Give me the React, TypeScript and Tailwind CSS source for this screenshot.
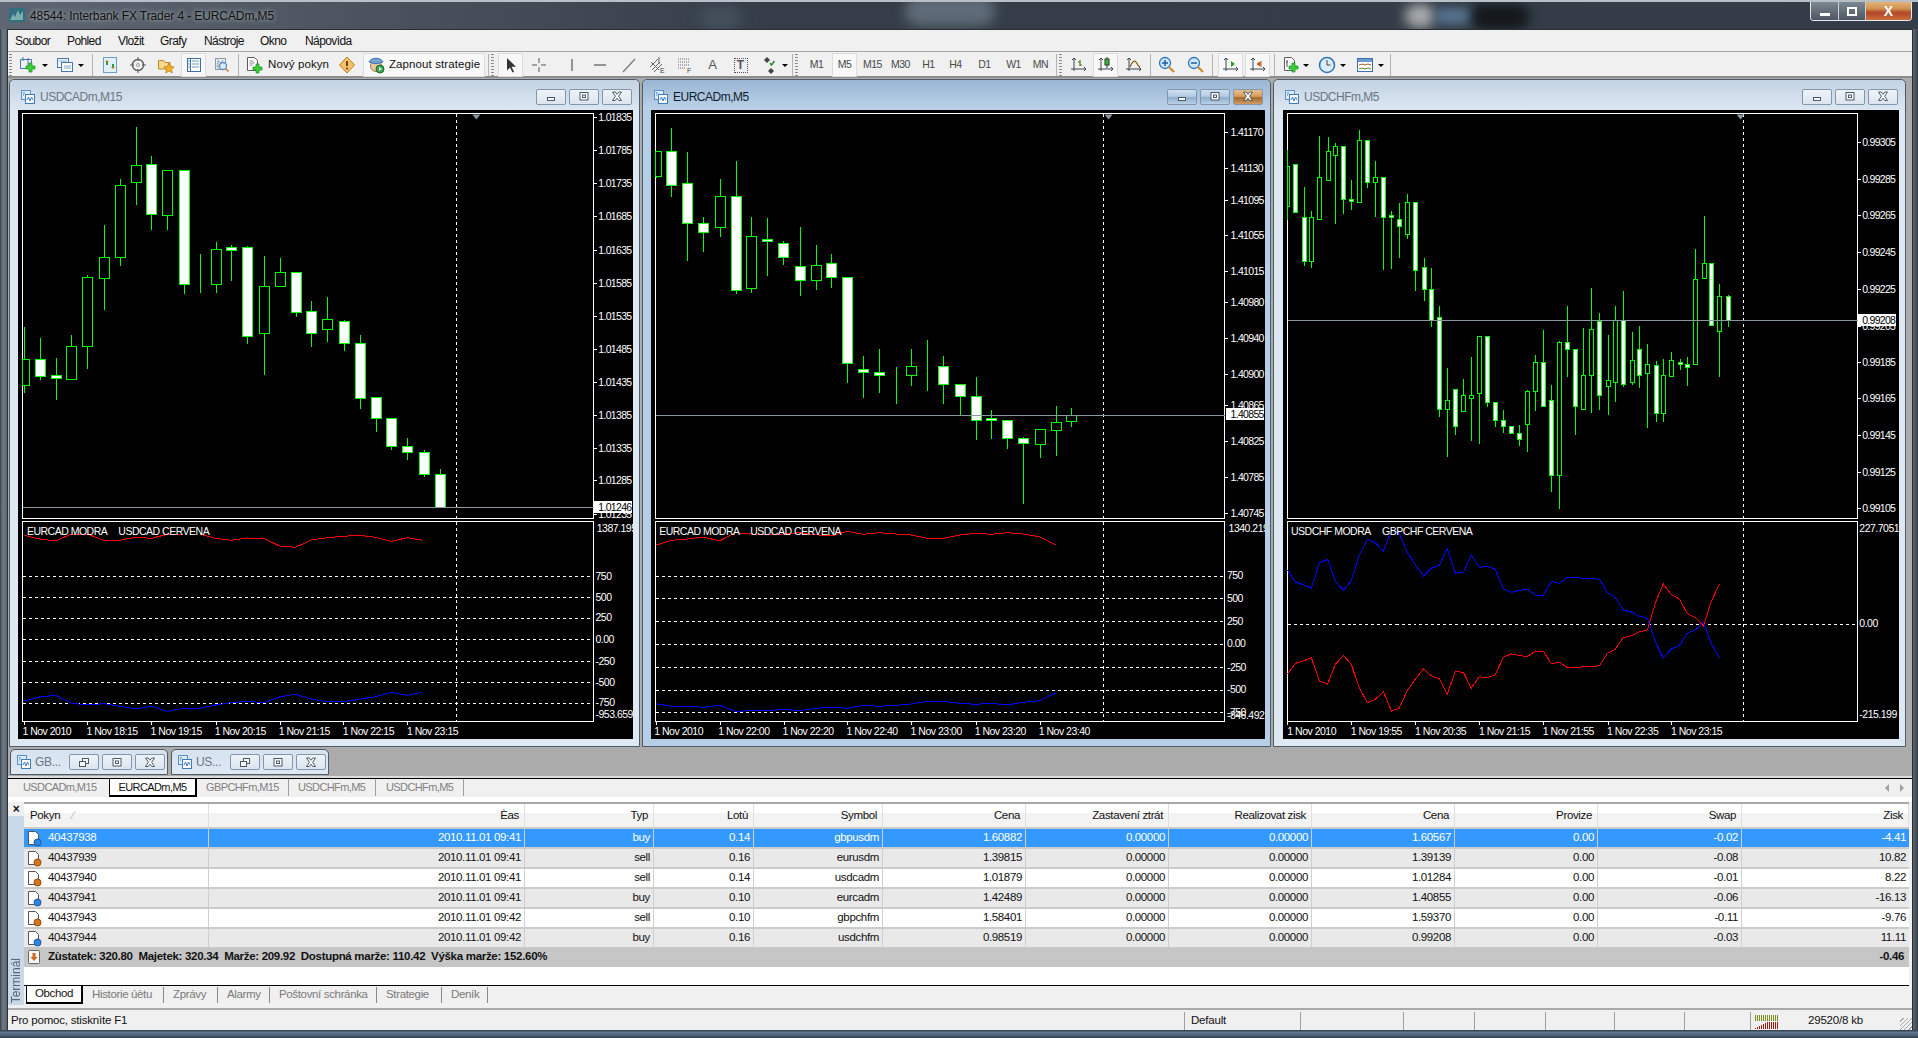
import type { ReactNode } from "react"

type Candle = [number, number, number, number, number, number]
type Label = [string, number, number]

const chart1: Candle[] = [
  [58, 678, 778, 856, 875, 0], [97, 712, 776, 829, 838, 1], [136, 772, 826, 835, 898, 1], [175, 703, 737, 838, 838, 0],
  [214, 522, 532, 737, 803, 0], [254, 373, 472, 535, 626, 0], [293, 235, 254, 472, 494, 0], [332, 78, 196, 247, 311, 0],
  [371, 166, 193, 343, 386, 1], [410, 208, 211, 346, 386, 0], [450, 211, 211, 553, 578, 1], [489, 460, 553, 553, 575, 0],
  [528, 424, 448, 553, 575, 0], [567, 433, 442, 451, 539, 1], [606, 436, 442, 709, 728, 1], [646, 466, 559, 700, 821, 0],
  [685, 472, 517, 559, 559, 0], [724, 517, 517, 637, 647, 1], [763, 601, 634, 700, 737, 1], [802, 589, 658, 688, 722, 0],
  [842, 658, 664, 730, 749, 1], [881, 703, 730, 895, 923, 1], [920, 892, 892, 955, 992, 1], [959, 955, 955, 1039, 1046, 1],
  [998, 1012, 1039, 1057, 1076, 1], [1038, 1048, 1055, 1123, 1127, 1], [1077, 1105, 1123, 1222, 1222, 1],
]

const chart2: Candle[] = [
  [38, 154, 154, 227, 230, 0], [77, 82, 154, 256, 287, 1], [116, 154, 250, 370, 479, 1], [155, 349, 370, 397, 452, 1],
  [195, 235, 289, 382, 407, 0], [234, 181, 289, 571, 578, 1], [273, 349, 409, 565, 575, 0], [312, 352, 418, 424, 524, 1],
  [351, 421, 430, 472, 491, 1], [391, 379, 499, 541, 584, 1], [430, 433, 496, 541, 566, 0], [469, 460, 490, 532, 560, 1],
  [508, 532, 532, 790, 845, 1], [547, 766, 808, 817, 892, 1], [586, 745, 817, 826, 875, 1], [626, 799, 826, 826, 908, 0],
  [665, 745, 799, 826, 854, 0], [704, 718, 799, 799, 869, 0], [743, 766, 799, 853, 908, 1], [783, 853, 853, 889, 946, 1],
  [822, 829, 889, 961, 1016, 1], [861, 928, 955, 961, 1013, 1], [900, 961, 961, 1015, 1043, 1], [939, 1009, 1015, 1030, 1210, 1],
  [979, 988, 988, 1033, 1070, 0], [1018, 916, 967, 991, 1064, 0], [1057, 922, 946, 964, 977, 0],
]

const chart3: Candle[] = [
  [18, 148, 199, 319, 358, 0], [38, 193, 193, 337, 337, 1], [58, 259, 352, 484, 496, 1], [77, 331, 352, 484, 502, 0],
  [97, 106, 232, 358, 358, 0], [117, 109, 154, 241, 241, 0], [136, 127, 139, 166, 370, 0], [156, 139, 139, 298, 338, 1],
  [175, 238, 298, 304, 326, 1], [195, 88, 121, 307, 307, 0], [215, 121, 121, 247, 260, 1], [234, 181, 232, 247, 347, 0],
  [254, 232, 232, 352, 506, 1], [274, 331, 346, 352, 503, 1], [293, 307, 358, 379, 470, 1], [313, 280, 307, 403, 413, 0],
  [333, 304, 307, 511, 569, 1], [353, 472, 502, 568, 601, 1], [372, 502, 568, 661, 677, 1], [392, 616, 650, 928, 947, 1],
  [411, 802, 901, 928, 1067, 0], [431, 868, 868, 979, 1001, 1], [451, 835, 886, 934, 934, 0], [470, 769, 886, 895, 1019, 0],
  [490, 709, 709, 880, 1028, 0], [510, 709, 709, 907, 919, 1], [529, 907, 907, 961, 979, 1], [549, 928, 961, 979, 995, 1],
  [569, 979, 979, 1000, 1000, 1], [588, 973, 1000, 1018, 1034, 1], [608, 868, 874, 973, 1052, 0], [628, 763, 787, 874, 929, 0],
  [647, 688, 787, 919, 919, 1], [667, 853, 901, 1126, 1172, 1], [687, 721, 727, 1126, 1223, 0], [706, 616, 727, 748, 827, 1],
  [726, 748, 748, 919, 1001, 1], [746, 682, 826, 928, 928, 0], [765, 562, 688, 826, 935, 0], [785, 637, 664, 886, 928, 1],
  [805, 703, 841, 859, 941, 0], [824, 616, 661, 847, 902, 0], [844, 571, 661, 853, 859, 1], [864, 694, 781, 847, 853, 0],
  [883, 676, 748, 826, 862, 1], [903, 730, 793, 820, 980, 0], [923, 781, 796, 940, 962, 1], [942, 775, 826, 940, 962, 0],
  [962, 754, 781, 829, 829, 0], [982, 773, 787, 793, 808, 1], [1001, 769, 793, 802, 854, 1], [1021, 445, 538, 793, 793, 0],
  [1041, 346, 490, 535, 535, 0], [1060, 490, 490, 676, 676, 1], [1080, 550, 589, 694, 827, 0], [1100, 583, 589, 661, 677, 1],
]

const blue3 = [180, 216, 224, 235, 158, 148, 213, 241, 213, 135, 88, 98, 124, 60, 70, 127, 165, 198, 175, 165, 115, 190, 186, 135, 172, 169, 178, 236, 247, 241, 238, 256, 256, 214, 220, 202, 202, 205, 205, 208, 248, 262, 300, 306, 318, 325, 397, 444, 417, 406, 370, 360, 338, 400, 443]
const x3 = chart3.map((c) => c[0])

const series = (xs: number[], ys: number[]) => ys.map((y, i) => [xs[i], y] as [number, number])

const xs1 = [58, 97, 136, 175, 214, 254, 293, 332, 371, 410, 450, 489, 528, 567, 606, 646, 685, 724, 763, 802, 842, 881, 920, 959, 998, 1035]
const xs2 = [38, 77, 116, 155, 195, 234, 273, 312, 351, 391, 430, 469, 508, 547, 586, 626, 665, 704, 743, 783, 822, 861, 900, 939, 979, 1018]

const panes = [
  {
    x0: 0, left: 18, sx: 2.45, candles: chart1, bodyW: 10, frame: [54, 1452], vline: 1116, tri: 1167,
    prices: [["1.01835", 52], ["1.01785", 151], ["1.01735", 250], ["1.01685", 349], ["1.01635", 449], ["1.01585", 548], ["1.01535", 647], ["1.01485", 746], ["1.01435", 845], ["1.01385", 944], ["1.01335", 1043], ["1.01285", 1141], ["1.01235", 1241]] as [string, number][],
    labelX: 1466, bid: ["1.01246", 1220, 1222] as [string, number, number], bidBox: 1455,
    levels: [199, 262, 325, 388, 454, 517, 580],
    subLabels: [["1387.195", 1462, 55], ["750", 1459, 197], ["500", 1459, 260], ["250", 1459, 322], ["0.00", 1459, 386], ["-250", 1459, 452], ["-500", 1459, 515], ["-750", 1459, 577], ["-953.659", 1459, 612]] as Label[],
    legend: [["EURCAD MODRA", 66], ["USDCAD CERVENA", 290]] as [string, number][],
    times: ["1 Nov 2010", "1 Nov 18:15", "1 Nov 19:15", "1 Nov 20:15", "1 Nov 21:15", "1 Nov 22:15", "1 Nov 23:15"],
    timeX: [55, 212, 369, 526, 683, 840, 997], tickX: [58, 214, 371, 528, 685, 841, 998],
    red: series(xs1, [76, 87, 93, 72, 72, 91, 91, 82, 85, 73, 72, 72, 85, 91, 84, 85, 108, 112, 90, 83, 79, 76, 82, 94, 83, 91]),
    blue: series(xs1, [573, 561, 556, 579, 585, 581, 589, 597, 589, 604, 595, 595, 585, 578, 574, 578, 561, 553, 567, 575, 575, 568, 560, 547, 556, 547]),
  },
  {
    x0: 640, left: 651, sx: 2.45, candles: chart2, bodyW: 10, frame: [36, 1432], vline: 1135, tri: 1148,
    prices: [["1.41170", 95], ["1.41130", 203], ["1.41095", 299], ["1.41055", 404], ["1.41015", 512], ["1.40980", 607], ["1.40940", 713], ["1.40900", 821], ["1.40865", 916], ["1.40825", 1022], ["1.40785", 1130], ["1.40745", 1238]] as [string, number][],
    labelX: 1447, bid: ["1.40855", 943, 946] as [string, number, number], bidBox: 1436,
    levels: [197, 265, 334, 403, 472, 539, 607],
    subLabels: [["1340.219", 1442, 55], ["750", 1438, 195], ["500", 1438, 263], ["250", 1438, 332], ["0.00", 1438, 400], ["-250", 1438, 470], ["-500", 1438, 537], ["-750", 1438, 606], ["-846.492", 1438, 614]] as Label[],
    legend: [["EURCAD MODRA", 47], ["USDCAD CERVENA", 270]] as [string, number][],
    times: ["1 Nov 2010", "1 Nov 22:00", "1 Nov 22:20", "1 Nov 22:40", "1 Nov 23:00", "1 Nov 23:20", "1 Nov 23:40"],
    timeX: [35, 192, 349, 506, 663, 820, 977], tickX: [38, 195, 352, 508, 665, 822, 979],
    red: series(xs2, [106, 91, 87, 81, 93, 68, 72, 72, 72, 68, 74, 78, 64, 73, 68, 72, 75, 85, 85, 75, 70, 73, 68, 72, 80, 104]),
    blue: series(xs2, [581, 589, 589, 592, 586, 604, 602, 602, 598, 602, 595, 592, 595, 586, 589, 586, 582, 574, 574, 580, 583, 580, 585, 577, 572, 549]),
  },
  {
    x0: 1280, left: 1283, sx: 2.458, candles: chart3, bodyW: 4, frame: [16, 1418], vline: 1139, tri: 1132,
    prices: [["0.99305", 125], ["0.99285", 236], ["0.99265", 344], ["0.99245", 455], ["0.99225", 566], ["0.99205", 677], ["0.99185", 786], ["0.99165", 893], ["0.99145", 1004], ["0.99125", 1115], ["0.99105", 1223]] as [string, number][],
    labelX: 1431, bid: ["0.99208", 659, 661] as [string, number, number], bidBox: 1421,
    levels: [343],
    subLabels: [["227.7051", 1424, 55], ["0.00", 1424, 340], ["-215.199", 1424, 613]] as Label[],
    legend: [["USDCHF MODRA", 27], ["GBPCHF CERVENA", 251]] as [string, number][],
    times: ["1 Nov 2010", "1 Nov 19:55", "1 Nov 20:35", "1 Nov 21:15", "1 Nov 21:55", "1 Nov 22:35", "1 Nov 23:15"],
    timeX: [18, 174, 332, 489, 646, 804, 961], tickX: [18, 175, 333, 490, 647, 805, 962],
    red: series(x3, blue3.map((b) => 343 + (343 - b) * (b < 343 ? 0.92 : 1.2))),
    blue: series(x3, blue3),
  },
]

const ChartPane = ({ p }: { p: (typeof panes)[number] }) => {
  const fx = (d: number) => d / p.sx + p.x0 - p.left
  const fy = (d: number) => d / 3 + 100 - 110
  const sy = (d: number) => d / 3 + 510 - 110
  const crisp = (v: number) => Math.round(v) + 0.5
  const l = crisp(fx(p.frame[0]))
  const r = crisp(fx(p.frame[1]))
  const top1 = crisp(fy(40))
  const bot1 = crisp(fy(1255))
  const top2 = crisp(sy(32))
  const bot2 = crisp(sy(634))
  const v = crisp(fx(p.vline))
  const t = fx(p.tri)
  const poly = (pts: [number, number][]) => pts.map(([x, y]) => `${fx(x).toFixed(1)},${sy(y).toFixed(1)}`).join(" ")

  return (
    <svg className="w-full h-full block bg-black font-['Liberation_Sans',sans-serif]" fill="#fff" fontSize="10.5" letterSpacing="-0.5">
      <g shapeRendering="crispEdges">
        <rect x={l} y={top1} width={r - l} height={bot1 - top1} fill="none" stroke="#fff" />
        <rect x={l} y={top2} width={r - l} height={bot2 - top2} fill="none" stroke="#fff" />
        <line x1={v} x2={v} y1={top1} y2={bot2} stroke="#fff" strokeDasharray="3 3" />
        {p.candles.map(([x, hi, top, bottom, lo, fill]) => {
          const cx = crisp(fx(x))
          const x1 = Math.max(cx - p.bodyW / 2, l)
          const x2 = cx + p.bodyW / 2
          return (
            <g key={x} stroke="#00ff00">
              <line x1={cx} x2={cx} y1={crisp(fy(hi))} y2={crisp(fy(lo))} />
              <rect x={x1} y={crisp(fy(top))} width={x2 - x1} height={Math.max(Math.round(fy(bottom)) - Math.round(fy(top)), 0)} fill={fill ? "#fff" : "#000"} />
            </g>
          )
        })}
        {p.levels.map((y) => (
          <line key={y} x1={l} x2={r} y1={crisp(sy(y))} y2={crisp(sy(y))} stroke="#fff" strokeDasharray="3 3" />
        ))}
        <line x1={l} x2={r} y1={crisp(fy(p.bid[2]))} y2={crisp(fy(p.bid[2]))} stroke="#8c96a0" />
        {p.prices.map(([s, y]) => (
          <line key={s} x1={r} x2={r + 3} y1={crisp(fy(y))} y2={crisp(fy(y))} stroke="#fff" />
        ))}
        {p.tickX.map((x) => (
          <line key={x} x1={crisp(fx(x))} x2={crisp(fx(x))} y1={bot2} y2={bot2 + 3} stroke="#fff" />
        ))}
        <polyline points={poly(p.red)} fill="none" stroke="#ff0000" />
        <polyline points={poly(p.blue)} fill="none" stroke="#0000ff" />
      </g>
      <path d={`M${t - 4} ${top1 + 1}h8l-4 5z`} fill="#8c96a0" />
      {p.prices.map(([s, y]) => (
        <text key={s} x={fx(p.labelX)} y={fy(y) + 4} letterSpacing="-0.7">{s}</text>
      ))}
      <rect x={fx(p.bidBox)} y={Math.round(fy(p.bid[1])) - 6} width="38" height="12" fill="#fff" shapeRendering="crispEdges" />
      <text x={fx(p.labelX)} y={fy(p.bid[1]) + 4} fill="#000" letterSpacing="-0.7">{p.bid[0]}</text>
      {p.subLabels.map(([s, x, y]) => (
        <text key={s} x={fx(x)} y={sy(y) + 4}>{s}</text>
      ))}
      {p.legend.map(([s, x]) => (
        <text key={s} x={fx(x)} y={sy(62) + 4}>{s}</text>
      ))}
      {p.times.map((s, i) => (
        <text key={s} x={fx(p.timeX[i])} y={sy(662) + 4}>{s}</text>
      ))}
    </svg>
  )
}

const WinIcon = () => (
  <svg width="16" height="16" viewBox="0 0 16 16" fill="none" className="shrink-0">
    <rect x="1.5" y="1.5" width="9" height="9" fill="#dcecfb" stroke="#5b8fc7" />
    <rect x="5.5" y="5.5" width="9" height="9" fill="#fff" stroke="#3d7cc0" />
    <path d="M7 11l1.5-3 1.5 4 1.5-4 1.5 3" stroke="#3d7cc0" />
    <path d="M3 4h2M3 6h1" stroke="#3d7cc0" />
  </svg>
)

const Glyph = ({ kind }: { kind: string }) => (
  <svg width="12" height="11" viewBox="0 0 12 11" fill="none">
    {kind === "min" && <rect x="2.5" y="6.5" width="7" height="3" fill="#fff" stroke="#4c5a68" />}
    {kind === "max" && <><rect x="2" y="1.5" width="8" height="7.5" fill="#fff" stroke="#4c5a68" /><rect x="4.5" y="4" width="3" height="2.5" stroke="#4c5a68" /></>}
    {kind === "restore" && <><rect x="4.5" y="1.5" width="6" height="5" fill="#fff" stroke="#4c5a68" /><rect x="1.5" y="4.5" width="6" height="5" fill="#fff" stroke="#4c5a68" /></>}
    {kind === "close" && <path d="M1.5 1h2.7L6 3.3 7.8 1h2.7L7.6 5.2l2.9 4.3H7.8L6 7.2 4.2 9.5H1.5l2.9-4.3z" fill="#fff" stroke="#4c5a68" />}
  </svg>
)

const WinBtn = ({ kind, active }: { kind: string; active?: boolean }) => (
  <div
    className={`w-[30px] h-[16px] rounded-[2px] border border-[#8297ad] flex items-center justify-center ${
      active && kind === "close"
        ? "bg-[linear-gradient(#e9c08e_0%,#d69d5b_45%,#a5682f_55%,#cf9c63_100%)] border-[#7a4a22]"
        : active
          ? "bg-[linear-gradient(#cfe0f1_0%,#b3cbe3_45%,#8fadc9_55%,#bcd2e8_100%)]"
          : "bg-[linear-gradient(#eef3f8,#dbe5ef)]"
    }`}
  >
    <Glyph kind={kind} />
  </div>
)

const ChartWindow = ({ title, p, className, inner, active }: { title: string; p: (typeof panes)[number]; className: string; inner: string; active?: boolean }) => (
  <div className={`flex flex-col rounded-t-[5px] border border-[#4e5a66] pb-[7px] ${className} ${active ? "bg-[#b5cfe9]" : "bg-[#dde8f3]"}`}>
    <div
      className={`h-[30px] shrink-0 flex items-center gap-[4px] rounded-t-[5px] pt-[3px] pl-[10px] pr-[7px] ${
        active ? "bg-[linear-gradient(#9ab6d3,#bcd2e9)] text-[#101c2c]" : "bg-[linear-gradient(#c4d3e2,#dbe6f2)] text-[#6b7683]"
      }`}
    >
      <WinIcon />
      <span className="text-[12px] tracking-[-0.5px]">{title}</span>
      <div className="ml-auto flex gap-[3px]">
        <WinBtn kind="min" active={active} />
        <WinBtn kind="max" active={active} />
        <WinBtn kind="close" active={active} />
      </div>
    </div>
    <div className={`flex-1 min-h-0 ${inner}`}>
      <ChartPane p={p} />
    </div>
  </div>
)

const MiniWindow = ({ title }: { title: string }) => (
  <div className="w-[158px] h-[26px] flex items-center rounded-t-[5px] border border-[#4e5a66] bg-[linear-gradient(#d6e2ef,#dfe9f4)] pl-[5px] text-[#6b7683]">
    <WinIcon />
    <span className="ml-[3px] w-[34px] text-[12px] tracking-[-0.3px]">{title}</span>
    <div className="flex gap-[3px]">
      <WinBtn kind="restore" />
      <WinBtn kind="max" />
      <WinBtn kind="close" />
    </div>
  </div>
)

const Sep = ({ className = "" }: { className?: string }) => <div className={`w-px h-[22px] bg-[#b4b4b4] ${className}`} />
const Grip = ({ className = "" }: { className?: string }) => (
  <div className={`w-[3px] h-[22px] bg-[repeating-linear-gradient(#8a8a8a_0_1px,transparent_1px_3px)] ${className}`} />
)

const Btn = ({ children, className = "", on }: { children?: ReactNode; className?: string; on?: boolean }) => (
  <div className={`h-[24px] flex items-center justify-center text-[11px] text-[#4a4a4a] ${on ? "bg-[#f8f8f8] border border-[#dcdcdc]" : ""} ${className || "w-[25px]"}`}>
    {children}
  </div>
)

const Caret = ({ className = "w-[10px]" }: { className?: string }) => (
  <div className={`flex items-center justify-center ${className}`}>
    <div className="border-x-[3px] border-t-[3px] border-x-transparent border-t-black" />
  </div>
)

const Plus = () => <path d="M9 10h3V7h3v3h3v3h-3v3h-3v-3H9z" transform="translate(-2 0)" fill="#35d135" stroke="#1c8a1c" strokeWidth="0.7" />

const Ico = ({ children }: { children: ReactNode }) => (
  <svg width="18" height="18" viewBox="0 0 18 18" fill="none">{children}</svg>
)

const TimeBtn = ({ t, on, className = "w-[25px]" }: { t: string; on?: boolean; className?: string }) => (
  <Btn on={on} className={className}><span className="tracking-[-0.5px] text-[10.5px]">{t}</span></Btn>
)

const AxisIcon = ({ children }: { children?: ReactNode }) => (
  <Ico>
    <path d="M4 2v13M1 13h15M2 4l2-2 2 2M14 11l2 2-2 2" stroke="#3c4650" />
    {children}
  </Ico>
)

const Toolbar = () => (
  <div className="h-[27px] shrink-0 flex items-center pt-[2px] bg-[#f0f0f0] border-t border-b-2 border-t-[#a6a6a6] border-b-[#8c8c8c] font-['Liberation_Sans',sans-serif]">
    <Grip className="ml-[1px]" />
    <Btn className="w-[25px] ml-[3px]">
      <Ico><path d="M1.5 3.5h11M1.5 3.5v9h11v-9M4 1v4M9 2v8" stroke="#4777ab" /><Plus /></Ico>
    </Btn>
    <Caret />
    <Btn className="w-[23px] ml-[3px]">
      <Ico><rect x="1.5" y="2.5" width="11" height="9" stroke="#4777ab" fill="#eef5fc" /><rect x="5.5" y="6.5" width="11" height="9" stroke="#4777ab" fill="#fff" /><path d="M3 5h8M8 10h7M8 12h7" stroke="#88a9cc" /></Ico>
    </Btn>
    <Caret />
    <Sep className="ml-[6px]" />
    <Btn className="w-[25px] ml-[4px]">
      <Ico><rect x="2.5" y="1.5" width="13" height="15" fill="#e2f0fb" stroke="#6f9dc6" /><path d="M6 4l2 2H4zM12 13l-2-2h4z" fill="#c87b1a" /><path d="M6 6v3M12 8v3" stroke="#2c9a3a" strokeWidth="2" /></Ico>
    </Btn>
    <Btn className="w-[25px] ml-[3px]">
      <Ico><circle cx="9" cy="9" r="5.5" stroke="#5c5c5c" strokeWidth="1.4" /><circle cx="9" cy="9" r="1.5" stroke="#9a9a9a" /><path d="M9 1v4M9 13v4M1 9h4M13 9h4" stroke="#5c5c5c" /></Ico>
    </Btn>
    <Btn className="w-[25px] ml-[3px]">
      <Ico><path d="M1.5 13V4.5h5l1.5 2h5V13z" fill="#f6d98f" stroke="#b98a30" /><path d="M12 7l1.7 3.5 3.5.5-2.6 2.4.7 3.6-3.3-1.9L8.7 17l.7-3.6L6.8 11l3.5-.5z" fill="#f2b01e" stroke="#b8791a" strokeWidth="0.7" /></Ico>
    </Btn>
    <Btn on className="w-[25px] ml-[3px]">
      <Ico><rect x="2.5" y="2.5" width="13" height="13" fill="#fff" stroke="#3d6fa8" /><path d="M5.5 2.5v13" stroke="#3d6fa8" /><path d="M3 5h2M3 8h2M3 11h2M7 5h7M7 8h7M7 11h7" stroke="#6c97c4" /></Ico>
    </Btn>
    <Btn className="w-[25px] ml-[3px]">
      <Ico><rect x="2.5" y="2.5" width="10" height="11" fill="#eef2f6" stroke="#8a98a8" /><path d="M5 2v11M2 10h10M4 8l2-3 2 2 2-3" stroke="#a0a8b0" /><circle cx="10" cy="10" r="3.5" stroke="#5a8fc6" strokeWidth="1.3" fill="#dceafa" /><path d="M12.5 12.5l3 3" stroke="#c0843a" strokeWidth="1.6" /></Ico>
    </Btn>
    <Sep className="ml-[4px]" />
    <Btn className="w-[88px] ml-[6px] justify-start">
      <Ico><path d="M2.5 1.5h7l3 3v10h-10z" fill="#fff" stroke="#5c5c5c" /><path d="M4.5 5h4M4.5 7h5M4.5 9h3" stroke="#8a8a8a" /><path d="M9 10h3V7h3v3h3v3h-3v3h-3v-3H9z" transform="translate(-1 1)" fill="#35d135" stroke="#1c8a1c" strokeWidth="0.7" /></Ico>
      <span className="ml-[5px] text-[11.5px] text-[#111] tracking-[0.1px]">Nový pokyn</span>
    </Btn>
    <Btn className="w-[24px] ml-[2px]">
      <Ico><path d="M9 1l7.5 8L9 17 1.5 9z" fill="#f3c26a" stroke="#c07a1e" /><path d="M9 5v5" stroke="#7a3d0a" strokeWidth="2" /><circle cx="9" cy="12.5" r="1.1" fill="#7a3d0a" /></Ico>
    </Btn>
    <Btn on className="w-[122px] ml-[4px] justify-start pl-[3px]">
      <Ico><circle cx="9" cy="10" r="5.5" fill="#e9c9a0" stroke="#a87c4c" /><path d="M2 6c2-5 12-5 14 0-4 2-10 2-14 0z" fill="#6ea5d6" stroke="#3f74a8" /><circle cx="13" cy="13" r="4" fill="#34a84a" stroke="#1f6e2e" /><path d="M12 11l3 2-3 2z" fill="#fff" /></Ico>
      <span className="ml-[4px] text-[11.5px] text-[#111] tracking-[0.1px]">Zapnout strategie</span>
    </Btn>
    <Sep className="ml-[3px]" />
    <Grip className="ml-[2px]" />
    <Btn on className="w-[25px] ml-[4px]">
      <Ico><path d="M5 2v12.5l3-3 2.5 5 1.5-.8-2.4-5H14z" fill="#333" /></Ico>
    </Btn>
    <Btn className="w-[25px] ml-[3px]">
      <Ico><path d="M9 2v5M9 11v5M2 9h5M11 9h5" stroke="#555" /></Ico>
    </Btn>
    <Btn className="w-[25px] ml-[8px]"><Ico><path d="M9 3v12" stroke="#555" strokeWidth="1.2" /></Ico></Btn>
    <Btn className="w-[25px] ml-[3px]"><Ico><path d="M3 9h12" stroke="#555" strokeWidth="1.2" /></Ico></Btn>
    <Btn className="w-[25px] ml-[4px]"><Ico><path d="M3 16L15 3" stroke="#777" strokeWidth="1.2" /></Ico></Btn>
    <Btn className="w-[25px] ml-[3px]">
      <Ico><path d="M2 11l8-8M4 14l8-8M6 16l8-8M3 6l8 8M11 1v7" stroke="#666" /><text x="12" y="17" fontSize="7" fill="#444" stroke="none" fontFamily="Liberation Sans">E</text></Ico>
    </Btn>
    <Btn className="w-[25px] ml-[3px]">
      <Ico><path d="M2 3h12M2 6h12M2 9h12M2 12h8" stroke="#666" strokeDasharray="1 1" /><text x="11" y="17" fontSize="7" fill="#444" stroke="none" fontFamily="Liberation Sans">F</text></Ico>
    </Btn>
    <Btn className="w-[25px] ml-[3px]"><span className="text-[13px] text-[#555]">A</span></Btn>
    <Btn className="w-[25px] ml-[3px]">
      <div className="w-[14px] h-[15px] border border-dotted border-[#555] flex items-center justify-center text-[12px] font-bold text-[#555] leading-none">T</div>
    </Btn>
    <Btn className="w-[25px] ml-[3px]">
      <Ico><path d="M7 1l3 3-3 3-3-3z" fill="#444" /><path d="M10 7l1.5 2 3-4" stroke="#2a8a2a" strokeWidth="1.4" /><path d="M11 12l3 3-3 3-3-3z" fill="#444" /></Ico>
    </Btn>
    <Caret className="w-[8px]" />
    <Sep className="ml-[3px]" />
    <Grip className="ml-[2px]" />
    <TimeBtn t="M1" className="w-[25px] ml-[6px]" />
    <TimeBtn t="M5" on className="w-[25px] ml-[3px]" />
    <TimeBtn t="M15" className="w-[25px] ml-[3px]" />
    <TimeBtn t="M30" className="w-[25px] ml-[3px]" />
    <TimeBtn t="H1" className="w-[25px] ml-[3px]" />
    <TimeBtn t="H4" className="w-[25px] ml-[2px]" />
    <TimeBtn t="D1" className="w-[25px] ml-[4px]" />
    <TimeBtn t="W1" className="w-[25px] ml-[4px]" />
    <TimeBtn t="MN" className="w-[25px] ml-[2px]" />
    <Sep className="ml-[3px]" />
    <Grip className="ml-[2px]" />
    <Btn className="w-[25px] ml-[4px]"><AxisIcon><path d="M10 4v6M10 9h2M8 6h2" stroke="#4a7a14" strokeWidth="1.2" /></AxisIcon></Btn>
    <Btn on className="w-[25px] ml-[2px]"><AxisIcon><path d="M10 1v11" stroke="#333" /><rect x="8" y="3" width="4" height="6" fill="#2fc22f" stroke="#333" /></AxisIcon></Btn>
    <Btn className="w-[25px] ml-[3px]"><AxisIcon><path d="M5 11c2-6 5-7 6-5s2 4 4 5" stroke="#8a5a14" strokeWidth="1.2" /></AxisIcon></Btn>
    <Sep className="ml-[4px]" />
    <Btn className="w-[25px] ml-[3px]">
      <Ico><circle cx="7" cy="7" r="5.5" fill="#cfe6fb" stroke="#2e76bd" strokeWidth="1.3" /><path d="M4 7h6M7 4v6" stroke="#1a5fa5" strokeWidth="1.5" /><path d="M11 11l5 5" stroke="#d28a2a" strokeWidth="2.2" /></Ico>
    </Btn>
    <Btn className="w-[25px] ml-[4px]">
      <Ico><circle cx="7" cy="7" r="5.5" fill="#cfe6fb" stroke="#2e76bd" strokeWidth="1.3" /><path d="M4 7h6" stroke="#1a5fa5" strokeWidth="1.5" /><path d="M11 11l5 5" stroke="#d28a2a" strokeWidth="2.2" /></Ico>
    </Btn>
    <Sep className="ml-[4px]" />
    <Btn on className="w-[25px] ml-[5px]"><AxisIcon><path d="M9 5v6l4-3z" fill="#2f9a2f" /></AxisIcon></Btn>
    <Btn on className="w-[25px] ml-[2px]"><AxisIcon><path d="M12 5v6M8 8l3-2v4z" fill="#c8561a" stroke="#c8561a" /></AxisIcon></Btn>
    <Sep className="ml-[4px]" />
    <Btn className="w-[21px] ml-[5px]">
      <Ico><path d="M2.5 1.5h7l3 3v10h-10z" fill="#fff" stroke="#5c5c5c" /><path d="M5 4v7M4 6h2" stroke="#555" /><Plus /></Ico>
    </Btn>
    <Caret />
    <Btn className="w-[22px] ml-[5px]">
      <Ico><circle cx="9" cy="9" r="7.5" fill="#dcecfb" stroke="#2e76bd" strokeWidth="1.6" /><path d="M9 4v5h3.5" stroke="#444" /></Ico>
    </Btn>
    <Caret />
    <Btn className="w-[22px] ml-[6px]">
      <Ico><rect x="1.5" y="2.5" width="15" height="13" fill="#fff" stroke="#3d6fa8" /><rect x="2" y="3" width="14" height="3" fill="#6c9bd0" /><path d="M3 9l3-1 3 1 3-1 3 1" stroke="#a0641e" /><path d="M3 13l3-1 3 1 3-1 3 1" stroke="#6c8a1e" /></Ico>
    </Btn>
    <Caret />
    <Sep className="ml-[4px]" />
  </div>
)

const columns = "grid-cols-[185px_316px_129px_100px_129px_143px_143px_143px_143px_143px_144px_1fr]"

const headers = ["Èas", "Typ", "Lotù", "Symbol", "Cena", "Zastavení ztrát", "Realizovat zisk", "Cena", "Provize", "Swap", "Zisk"]

const orders = [
  ["40437938", "2010.11.01 09:41", "buy", "0.14", "gbpusdm", "1.60882", "0.00000", "0.00000", "1.60567", "0.00", "-0.02", "-4.41"],
  ["40437939", "2010.11.01 09:41", "sell", "0.16", "eurusdm", "1.39815", "0.00000", "0.00000", "1.39139", "0.00", "-0.08", "10.82"],
  ["40437940", "2010.11.01 09:41", "sell", "0.14", "usdcadm", "1.01879", "0.00000", "0.00000", "1.01284", "0.00", "-0.01", "8.22"],
  ["40437941", "2010.11.01 09:41", "buy", "0.10", "eurcadm", "1.42489", "0.00000", "0.00000", "1.40855", "0.00", "-0.06", "-16.13"],
  ["40437943", "2010.11.01 09:42", "sell", "0.10", "gbpchfm", "1.58401", "0.00000", "0.00000", "1.59370", "0.00", "-0.11", "-9.76"],
  ["40437944", "2010.11.01 09:42", "buy", "0.16", "usdchfm", "0.98519", "0.00000", "0.00000", "0.99208", "0.00", "-0.03", "11.11"],
]

const OrderIcon = ({ buy }: { buy: boolean }) => (
  <svg width="15" height="17" viewBox="0 0 15 17" fill="none" className="shrink-0">
    <path d="M1.5 1.5h7l3 3v10h-10z" fill="#fff" stroke="#555" />
    <circle cx="10.5" cy="12.5" r="3.5" fill={buy ? "#2f86de" : "#d6761e"} stroke={buy ? "#1c5aa0" : "#8f4a10"} />
  </svg>
)

const ChartTab = ({ t, className }: { t: string; className: string }) => (
  <div className={`h-[17px] flex items-center text-[11px] tracking-[-0.6px] text-[#808080] ${className}`}>{t}</div>
)

const BottomTab = ({ t, className }: { t: string; className: string }) => (
  <div className={`h-[16px] mt-[1px] flex items-center border-r border-[#8a8a8a] text-[#7a7a7a] ${className}`}>{t}</div>
)

const Terminal = () => (
  <div className="h-[232px] shrink-0 flex flex-col bg-[#f0f0f0] text-[11.5px] tracking-[-0.35px] text-[#111]">
    <div className="h-[2px] bg-[#dcdcdc]" />
    <div className="h-[19px] shrink-0 flex items-start border-t border-black">
      <ChartTab t="USDCADm,M15" className="pl-[15px] w-[101px]" />
      <div className="w-[88px] h-[18px] flex items-center justify-center bg-white border-l border-r-2 border-b-2 border-black text-[11px] tracking-[-0.6px] text-[#111]">EURCADm,M5</div>
      <ChartTab t="GBPCHFm,M15" className="pl-[9px] w-[92px] border-r border-[#a0a0a0]" />
      <ChartTab t="USDCHFm,M5" className="pl-[9px] w-[87px] border-r border-[#a0a0a0]" />
      <ChartTab t="USDCHFm,M5" className="pl-[10px] w-[88px] border-r border-[#a0a0a0]" />
      <div className="ml-auto flex gap-[11px] pr-[8px] pt-[5px]">
        <div className="border-y-[4px] border-r-[4px] border-y-transparent border-r-[#a0a0a0]" />
        <div className="border-y-[4px] border-l-[4px] border-y-transparent border-l-[#a0a0a0]" />
      </div>
    </div>
    <div className="h-[5px] shrink-0 bg-white" />
    <div className="flex-1 flex min-h-0 pb-[3px]">
      <div className="w-[16px] shrink-0 flex flex-col">
        <div className="h-[14px] flex items-center justify-center font-bold text-[12px] leading-none">×</div>
        <div className="flex-1 bg-[#c9d9e9] flex items-end justify-center pb-[2px]">
          <span className="[writing-mode:vertical-rl] rotate-180 text-[12px] tracking-normal text-[#5a6470]">Terminál</span>
        </div>
      </div>
      <div className="flex-1 flex flex-col min-w-0 bg-white mr-[3px]">
        <div className={`h-[25px] shrink-0 grid ${columns} border-t-2 border-[#a8a8a8] bg-[linear-gradient(#fff_38%,#f3f3f3_38%)]`}>
          <div className="flex items-center pl-[6px] border-r border-[#e0e0e0]">
            Pokyn<span className="ml-[12px] text-[#bbb]">∕</span>
          </div>
          {headers.map((h, i) => (
            <div key={i} className="flex items-center justify-end pr-[5px] border-r border-[#e0e0e0]">{h}</div>
          ))}
        </div>
        {orders.map((row, i) => (
          <div
            key={row[0]}
            className={`h-[20px] shrink-0 grid ${columns} border-t-2 border-[#cbcbcb] ${
              i === 0 ? "bg-[#3399ff] text-white" : i % 2 ? "bg-[#e9e9e9]" : "bg-white"
            }`}
          >
            <div className="flex items-center pl-[3px] gap-[6px] border-r border-[#cfcfcf]">
              <OrderIcon buy={row[2] === "buy"} />
              {row[0]}
            </div>
            {row.slice(1).map((c, j) => (
              <div key={j} className={`flex items-center justify-end pr-[3px] border-[#cfcfcf] ${j < 10 ? "border-r" : ""}`}>{c}</div>
            ))}
          </div>
        ))}
        <div className="h-[20px] shrink-0 flex items-center bg-[#c6c6c6] font-bold pl-[3px] pr-[5px]">
          <svg width="15" height="16" viewBox="0 0 15 16" fill="none" className="shrink-0">
            <rect x="1.5" y="1.5" width="11" height="13" rx="1" fill="#f4f4f4" stroke="#666" />
            <path d="M5.5 4h3v4h2l-3.5 4L3.5 8h2z" fill="#d2641a" />
          </svg>
          <span className="ml-[6px] whitespace-pre tracking-[-0.3px]">Zùstatek: 320.80  Majetek: 320.34  Marže: 209.92  Dostupná marže: 110.42  Výška marže: 152.60%</span>
          <span className="ml-auto">-0.46</span>
        </div>
        <div className="flex-1 bg-white" />
        <div className="h-[20px] shrink-0 flex items-start bg-[#f0f0f0] border-t border-black">
          <div className="ml-[2px] w-[57px] h-[18px] flex items-center justify-center bg-white border-l border-r-2 border-b-2 border-black">Obchod</div>
          <BottomTab t="Historie úètu" className="pl-[9px] w-[81px]" />
          <BottomTab t="Zprávy" className="pl-[9px] w-[54px]" />
          <BottomTab t="Alarmy" className="pl-[9px] w-[52px]" />
          <BottomTab t="Poštovní schránka" className="pl-[9px] w-[107px]" />
          <BottomTab t="Strategie" className="pl-[9px] w-[65px]" />
          <BottomTab t="Deník" className="pl-[9px] w-[46px]" />
        </div>
      </div>
    </div>
  </div>
)

const statusCells = ["w-[103px]", "w-[71px]", "w-[71px]", "w-[69px]", "w-[70px]", "w-[66px]"]

const StatusBar = () => (
  <div className="h-[22px] shrink-0 flex items-center pt-[2px] bg-[#f0f0f0] border-t-2 border-[#a8a8a8] text-[11.5px] tracking-[-0.2px] text-[#111]">
    <div className="w-[1176px] shrink-0 pl-[3px]">Pro pomoc, stisknìte F1</div>
    <div className="w-[116px] shrink-0 h-[18px] flex items-center pl-[6px] border-l border-[#a0a0a0]">Default</div>
    {statusCells.map((w, i) => (
      <div key={i} className={`${w} shrink-0 h-[18px] border-l border-[#a0a0a0]`} />
    ))}
    <div className="flex-1 h-[18px] flex items-center border-l border-[#a0a0a0] pl-[4px]">
      <svg width="24" height="15" viewBox="0 0 24 15" shapeRendering="crispEdges">
        {Array.from({ length: 12 }, (_, i) => (
          <g key={i}>
            <rect x={i * 2} y="1" width="1" height="6" fill="#7a8f1a" />
            <rect x={i * 2} y={Math.max(14 - i, 8)} width="1" height={15 - Math.max(14 - i, 8)} fill="#a01a10" />
          </g>
        ))}
      </svg>
      <span className="ml-[29px]">29520/8 kb</span>
      <div className="ml-auto self-end w-[12px] h-[12px] bg-[repeating-linear-gradient(135deg,transparent_0_2px,#a8a8a8_2px_3px)]" />
    </div>
  </div>
)

export default function App() {
  return (
    <div className="w-[1918px] h-[1038px] flex flex-col overflow-hidden bg-[#3b4652] font-['Liberation_Sans',sans-serif]">
      <div className="relative h-[29px] shrink-0 flex items-center overflow-hidden border-t-2 border-[#b9bfc6] bg-[linear-gradient(90deg,#5d6672_0%,#4a535d_20%,#353e48_40%,#343d47_100%)]">
        <div className="absolute left-[905px] top-[-6px] w-[90px] h-[30px] rounded-full bg-[#5f6b78] blur-[6px]" />
        <div className="absolute left-[700px] top-[4px] w-[40px] h-[24px] rounded-full bg-[#444f5c] blur-[6px]" />
        <div className="absolute left-[1405px] top-[2px] w-[30px] h-[24px] rounded-full bg-[#a7a9ab] blur-[6px]" />
        <div className="absolute left-[1435px] top-[6px] w-[40px] h-[16px] rounded-full bg-[#55728f] blur-[5px]" />
        <div className="absolute left-[1470px] top-[2px] w-[60px] h-[26px] rounded-full bg-[#14181c] blur-[6px]" />
        <svg width="16" height="14" viewBox="0 0 16 14" className="ml-[9px] relative shrink-0 mb-[1px]">
          <rect width="16" height="14" rx="1" fill="#2f6f80" />
          <path d="M1 12l3-6 2 3 3-7 2 5 3-4v9z" fill="#9fc7c4" opacity="0.7" />
        </svg>
        <span className="ml-[5px] relative text-[12px] text-[#111] tracking-[-0.1px] [text-shadow:0_0_5px_#ffffffb0]">48544: Interbank FX Trader 4 - EURCADm,M5</span>
        <div className="relative ml-auto mr-[6px] self-start flex h-[19px] rounded-b-[4px] border border-t-0 border-[#e6eaee] overflow-hidden">
          <div className="w-[28px] flex items-center justify-center border-r border-[#c8ced4] bg-[linear-gradient(#7d8791,#4d5763)]">
            <div className="w-[10px] h-[3px] mt-[6px] bg-white" />
          </div>
          <div className="w-[27px] flex items-center justify-center border-r border-[#c8ced4] bg-[linear-gradient(#7d8791,#4d5763)]">
            <div className="w-[10px] h-[9px] border-2 border-white" />
          </div>
          <div className="w-[45px] flex items-center justify-center bg-[linear-gradient(#e3b27a_0%,#d19652_35%,#b2452a_60%,#c96f36_100%)] text-white font-bold text-[14px] leading-none">X</div>
        </div>
      </div>

      <div className="flex-1 min-h-0 flex">
        <div className="w-[7px] shrink-0 bg-[linear-gradient(90deg,#3a424b_0%,#6f7a86_40%,#5a6672_100%)]" />
        <div className="flex-1 min-w-0 flex flex-col border border-[#2a2f35] border-b-0">
          <div className="h-[21px] shrink-0 flex items-center bg-[#f0f0f0] pl-[7px] text-[12px] tracking-[-0.6px] text-[#111]">
            <span className="w-[52px]">Soubor</span>
            <span className="w-[51px]">Pohled</span>
            <span className="w-[42px]">Vložit</span>
            <span className="w-[44px]">Grafy</span>
            <span className="w-[56px]">Nástroje</span>
            <span className="w-[45px]">Okno</span>
            <span>Nápovìda</span>
          </div>
          <Toolbar />
          <div className="h-[698px] shrink-0 flex flex-col bg-[#ababab] pt-[1px] pl-[1px] pr-[5px]">
            <div className="h-[668px] flex gap-[2px]">
              <ChartWindow title="USDCADm,M15" p={panes[0]} className="w-[631px]" inner="pl-[8px] pr-[6px]" />
              <ChartWindow title="EURCADm,M5" p={panes[1]} className="w-[629px]" inner="pl-[8px] pr-[5px]" active />
              <ChartWindow title="USDCHFm,M5" p={panes[2]} className="w-[633px]" inner="pl-[9px] pr-[6px]" />
            </div>
            <div className="mt-[2px] flex gap-[3px] pl-[1px]">
              <MiniWindow title="GB..." />
              <MiniWindow title="US..." />
            </div>
          </div>
          <Terminal />
          <StatusBar />
        </div>
        <div className="w-[5px] shrink-0 bg-[linear-gradient(90deg,#5a6672,#3a424b)]" />
      </div>
      <div className="h-[8px] shrink-0 bg-[linear-gradient(#2f3a45_0%,#5f7690_30%,#4c5f72_70%,#2f3a45_100%)]" />
    </div>
  )
}
